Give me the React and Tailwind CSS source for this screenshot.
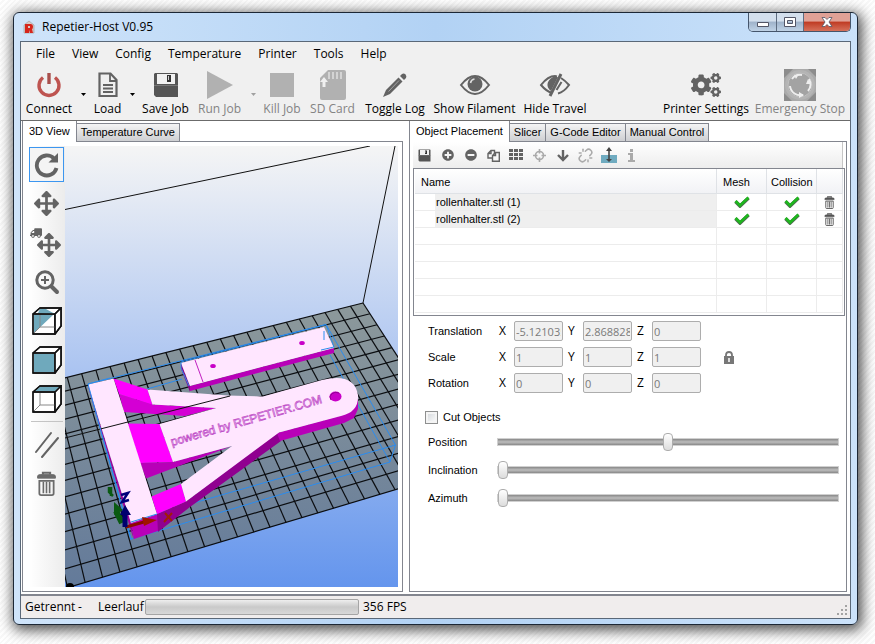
import React from 'react';
import { FaArrowsAlt, FaCogs, FaMinusCircle, FaPlusCircle, FaTruck } from 'react-icons/fa';
import { Unlink } from 'lucide-react';

const GRAY = '#636363';

/* ---------- icons ---------- */

function PowerIcon() {
  return (
    <svg width="26" height="28" viewBox="0 0 26 28" fill="none" stroke="#be5450" strokeWidth="3.4">
      <path d="M7 6.5a10 10 0 1 0 12 0" />
      <path d="M13 2v11" stroke="#a8504c" />
    </svg>
  );
}

function DocIcon() {
  return (
    <svg width="20" height="26" viewBox="0 0 20 26" fill="none" stroke={GRAY} strokeWidth="2.2">
      <path d="M1.5 1.5h11l6 6.5v16h-17z" />
      <path d="M12 2v7h6M5 13h10M5 16.5h10M5 20h10" strokeWidth="1.8" />
    </svg>
  );
}

function SaveIcon({ size = 26 }) {
  return (
    <svg width={size} height={size} viewBox="0 0 26 26">
      <path d="M2 1h22l1 1v23H3l-2-2V2z" fill="#555" />
      <path d="M4 2h18v10H4z" fill="#f1f1f1" />
      <path d="M14 3h4v7h-4z" fill="#333" />
      <path d="M15 4h1v4h-1z" fill="#ccc" />
      <path d="M1 13h24v1H1z" fill="#777" />
    </svg>
  );
}

function SdIcon() {
  return (
    <svg width="28" height="32" viewBox="0 0 28 32">
      <path d="M9 1h16a2 2 0 0 1 2 2v26a2 2 0 0 1-2 2H3a2 2 0 0 1-2-2V9z" fill="#b1b1b1" />
      <path d="M10 3v7M14 3v7M18 3v7M22 3v7" stroke="#d4d4d4" strokeWidth="2" />
      <path d="M5 8l4 5H6.500v5h-3v-5H1z" fill="#f0f0f0" />
    </svg>
  );
}

function PencilIcon() {
  return (
    <svg width="26" height="26" viewBox="0 0 26 26" fill={GRAY}>
      <path d="M16.500 5.500l4 4L8 22 1 25l3-7z" />
      <path d="M18 4l2-2q2-1 3.500.5T24 6l-2 2z" />
      <path d="M17 8.500L6.500 19.500" stroke="#a5a5a5" strokeWidth="1" />
    </svg>
  );
}

function EyeIcon() {
  return (
    <svg width="32" height="24" viewBox="0 0 32 24">
      <path d="M2 12Q9 3 16 3t14 9q-7 9-14 9T2 12z" fill="none" stroke={GRAY} strokeWidth="2" />
      <circle cx="16" cy="11" r="7.500" fill={GRAY} />
      <path d="M11.500 10a5 5 0 0 1 4-4" stroke="#ddd" strokeWidth="1.500" fill="none" />
    </svg>
  );
}

function HiddenEyeIcon() {
  return (
    <svg width="32" height="24" viewBox="0 0 32 24">
      <path d="M13 20Q7 18 2 12 9 3 16 3l2 .5M22 5q4 2.500 8 7-5 7-11 8.500" fill="none" stroke={GRAY} strokeWidth="2" />
      <path d="M19 4l-7 14q-4-3-3.500-7T14 4z" fill={GRAY} />
      <path d="M22 1L11 23" stroke={GRAY} strokeWidth="3" />
      <path d="M22.500 9l-5 8" stroke={GRAY} strokeWidth="2" />
    </svg>
  );
}

function EmergencyIcon() {
  return (
    <svg width="32" height="32" viewBox="0 0 32 32">
      <path d="M0 0h32v32H0z" fill="#aaa" />
      <path d="M0 0h9L0 9zM32 32v-9l-9 9zM32 0v8l-8-8zM0 32v-8l8 8z" fill="#8c8c8c" />
      <circle cx="16" cy="16" r="15" fill="#b4b4b4" />
      <circle cx="16" cy="16" r="12" fill="#a3a3a3" stroke="#bfbfbf" />
      <g stroke="#eee" strokeWidth="2" fill="none">
        <path d="M8 10a10.500 10.500 0 0 1 10-4" />
        <path d="M25 10a10.500 10.500 0 0 1-1 12" />
        <path d="M19 26a10.500 10.500 0 0 1-13-9" />
      </g>
      <path d="M10 6l5-1-3 5zM27 15l-3-5-2 5zM15 23v6l5-3z" fill="#eee" />
    </svg>
  );
}

function TrashIcon({ size = 12, color = '#555' }) {
  return (
    <svg width={size} height={size} viewBox="0 0 24 28" fill="none" stroke={color} className="shrink-0">
      <path d="M8 4V2h8v2" strokeWidth="2.400" />
      <path d="M2 8V6q0-2 3-2h14q3 0 3 2v2z" fill={color} strokeWidth="1" />
      <path d="M4 11h16v14q0 2-2 2H6q-2 0-2-2z" strokeWidth="2" />
      <path d="M8.500 12v13M12 12v13M15.500 12v13" strokeWidth="1.800" />
    </svg>
  );
}

function LockIcon() {
  return (
    <svg width="12" height="13" viewBox="0 0 12 13">
      <path d="M3 6V4q0-3 3-3t3 3v2" fill="none" stroke="#777" strokeWidth="1.800" />
      <path d="M1 5h10v8H1z" fill="#777" />
      <path d="M5 7h2v4H5z" fill="#ddd" />
    </svg>
  );
}

function CheckIcon() {
  return (
    <svg width="16" height="12" viewBox="0 0 16 12" className="mx-auto" fill="none">
      <path d="M1.500 5.500l4.500 4.500 8.500-8" stroke="#4c6b4c" strokeWidth="3.600" />
      <path d="M1.500 5l4.500 4.500 8.500-8" stroke="#1eb71e" strokeWidth="2.600" />
    </svg>
  );
}

function RotateIcon() {
  return (
    <svg width="26" height="26" viewBox="0 0 26 26">
      <path d="M20 6.500A10 10 0 1 0 22.500 16" fill="none" stroke={GRAY} strokeWidth="3.800" />
      <path d="M24 1v9.500h-9.500z" fill={GRAY} />
    </svg>
  );
}

function ZoomIcon() {
  return (
    <svg width="26" height="26" viewBox="0 0 26 26" fill="none" stroke={GRAY}>
      <circle cx="11" cy="11" r="8.200" strokeWidth="3" />
      <path d="M11 7v8M7 11h8" strokeWidth="2" />
      <path d="M17.500 17.500l5.500 5.500" strokeWidth="4" strokeLinecap="round" />
    </svg>
  );
}

function CubeIcon({ face }) {
  return (
    <svg width="30" height="28" viewBox="0 0 30 28" fill="none" stroke="#111" strokeWidth="1.300">
      <path d="M1 7h22v20H1zM1 7l7-6h21l-6 6M29 1v18l-6 8" fill="#fff" />
      <path d="M23 7l6-6v18l-6 8z" fill="#fff" />
      {face === 'cut' && <path d="M2 8h19L2 26zM8 2h6l9 5-17-1z" fill="#6fa9bc" stroke="none" />}
      {face === 'front' && <path d="M2 8h20v18H2z" fill="#6fa9bc" stroke="none" />}
      {face === 'top' && <path d="M3 6l5-4h19l-4 4z" fill="#6fa9bc" stroke="none" />}
      {face !== 'front' && <path d="M8 8v12h15M8 20l-6 6" stroke="#888" strokeWidth="1" />}
      <path d="M1 7h22v20H1zM1 7l7-6h21l-6 6M29 1v18l-6 8" />
    </svg>
  );
}

function ParallelIcon() {
  return (
    <svg width="26" height="28" viewBox="0 0 26 28" stroke={GRAY} strokeWidth="2" strokeLinecap="round">
      <path d="M2 21L17 2M8 26L24 7" />
    </svg>
  );
}

function DropArrow({ dim }) {
  return (
    <svg width="5" height="3" viewBox="0 0 5 3">
      <path d="M0 0h5L2.500 3z" fill={dim ? '#a0a0a0' : '#000'} />
    </svg>
  );
}

/* ---------- top toolbar ---------- */

function ToolButton({ label, icon, width, disabled, arrow }) {
  return (
    <div className="flex h-full items-center">
      <button disabled={disabled} className={`flex h-full flex-col items-center ${width} ${disabled ? 'text-[#838383]' : 'text-black'}`}>
        <span className="flex h-8 items-center justify-center">{icon}</span>
        <span className="whitespace-nowrap leading-4">{label}</span>
      </button>
      {arrow && (
        <button aria-label={`${label} options`} disabled={disabled} className={`flex h-full items-center justify-center ${arrow}`}>
          <DropArrow dim={disabled} />
        </button>
      )}
    </div>
  );
}

function Toolbar() {
  return (
    <div className="flex h-[51px] items-stretch pl-px">
      <ToolButton label="Connect" icon={<PowerIcon />} width="w-[54px]" arrow="w-[14px]" />
      <ToolButton label="Load" icon={<DocIcon />} width="w-[35px]" arrow="w-[15px]" />
      <ToolButton label="Save Job" icon={<SaveIcon />} width="w-[51px]" />
      <ToolButton
        label="Run Job"
        disabled
        width="w-[57px]"
        arrow="w-[10px]"
        icon={<svg width="26" height="28" viewBox="0 0 26 28"><path d="M0 0l26 14L0 28z" fill="#b1b1b1" /></svg>}
      />
      <ToolButton
        label="Kill Job"
        disabled
        width="w-[48px]"
        icon={<span className="h-6 w-6 bg-[#b1b1b1]" />}
      />
      <ToolButton label="SD Card" icon={<SdIcon />} width="w-[53px]" disabled />
      <ToolButton label="Toggle Log" icon={<PencilIcon />} width="w-[72px]" />
      <ToolButton label="Show Filament" icon={<EyeIcon />} width="w-[87px]" />
      <ToolButton label="Hide Travel" icon={<HiddenEyeIcon />} width="w-[74px]" />
      <div className="flex-1" />
      <ToolButton label="Printer Settings" icon={<FaCogs size={30} color={GRAY} />} width="w-[94px]" />
      <ToolButton label="Emergency Stop" icon={<EmergencyIcon />} width="w-[94px]" disabled />
      <div className="w-[3px]" />
    </div>
  );
}

/* ---------- 3D view ---------- */

// Projects a bed cell index (u across, v towards the viewer) to canvas coordinates.
function project(u, v) {
  const a = 0.003033 * u;
  const b = -0.01264 * v;
  const w = 1 + a + b;
  return [(363 + a * 4499 - b * 179) / w, (303 - a * 736 - b * 534) / w];
}

function bedLine(from, to) {
  return 'M' + project(...from).join(' ') + 'L' + project(...to).join(' ');
}

function Scene() {
  const cols = Array.from({ length: 26 }, (_, i) => i - 25);
  const rows = Array.from({ length: 14 }, (_, i) => i);
  const bed = [project(-25, 0), project(0, 0), project(0, 13), project(-25, 13)].map((p) => p.join(',')).join(' ');

  return (
    <svg viewBox="65 146 333 441" preserveAspectRatio="xMidYMid slice" className="h-full w-full" aria-label="3D print bed">
      <defs>
        <linearGradient id="sky" x1="0" y1="0" x2="0" y2="1">
          <stop offset="0" stopColor="#f5f5f5" />
          <stop offset="1" stopColor="#6495ed" />
        </linearGradient>
        <linearGradient id="bed" x1="0" y1="0" x2="0" y2="1">
          <stop offset="0" stopColor="#8d999b" />
          <stop offset="1" stopColor="#637a9a" />
        </linearGradient>
      </defs>
      <path d="M0 146h500v441H0z" fill="url(#sky)" />
      <path d="M65 209.500L370 146M363 303L395 146" stroke="#111" fill="none" />
      <polygon points={bed} fill="url(#bed)" />
      <g stroke="#0b0d10" strokeWidth="1.200">
        {cols.map((u) => <path key={u} d={bedLine([u, 0], [u, 13])} />)}
        {rows.map((v) => <path key={v} d={bedLine([-25, v], [0, v])} />)}
      </g>
      <circle cx="70" cy="587" r="4" />

      {/* bounding boxes behind the parts */}
      <g stroke="#2b8cee" fill="none">
        <path d="M88 384L326 324.500L395.500 445L390 462L330 355M395.500 445L131 521M390 462L131 539L88 384M147 389L182 379" />
      </g>

      {/* flat bar */}
      <path d="M181 363l9 23v6l-9-23z" fill="#8c008c" />
      <path d="M190 386l144-38v5l-144 38z" fill="#b800b8" />
      <path d="M181 363L324 327L334 348L190 386z" fill="#ffe6ff" />
      <path d="M195 360l8 22" stroke="#c020c0" />
      <ellipse cx="213" cy="366" rx="2.800" ry="2" fill="#c800c8" />
      <ellipse cx="302" cy="343" rx="2.800" ry="2" fill="#c800c8" />
      <path d="M181 362L326 324.500L334 347M324 331v9M321 350l13-3M181 362v6l8 18" stroke="#2b8cee" fill="none" />

      {/* holder */}
      <path d="M88 385l43 138 3 17-3-9L89 390z" fill="#a000a0" />
      <path d="M131 523l27-9v17l-24 8z" fill="#b800b8" />
      <path d="M157 514L186 501.500L277 432L281 441L190 507L158 532z" fill="#900090" />
      <path d="M277 433L343 415L355 407L358 397V409L354 418L344 423L280 441z" fill="#b800b8" />
      <path d="M113.500 378.500L147.500 389.500L152.500 405L119 394z" fill="#f0f" />
      <path d="M119 394L152.500 404.500L216 408L185 416L124 412z" fill="#d400d4" />
      <path d="M127.500 423.500L159.500 424L173 462L140 463z" fill="#f0f" />
      <path d="M140 463L173 462L232 446L146 478.500z" fill="#b800b8" />
      <path d="M151.500 496.500L181 484L186 501.500L157 514z" fill="#f0f" />
      <path
        d="M147.500 389.500L228 395.500L263 396.500L322 380Q354 372 358 395Q359 412 341 416L279 432.500L186 501.500L181 484L232 446L173 462L159.500 424L216 408L152.500 404.500z"
        fill="#ffe6ff"
      />
      <path d="M88 384.500L113.500 378.500L157 514L131 523z" fill="#ffe6ff" />
      <ellipse cx="335.500" cy="396.500" rx="6" ry="5" fill="#c800c8" />
      <path d="M331 400a6 5 0 0 1 8-7" stroke="#900090" fill="none" />
      <path d="M65 438L230 396" stroke="#111" />
      <path d="M88 384l43 156M157 514L131 522M88 384l22-6" stroke="#2b8cee" fill="none" />
      <text
        transform="translate(172 446) rotate(-16)"
        fill="#ffe6ff"
        stroke="#c050c8"
        strokeWidth="0.700"
        className="font-['Liberation_Sans'] text-[12px]"
      >
        powered by REPETIER.COM
      </text>

      {/* axes */}
      <path d="M122 523L116 511" stroke="#0a5a12" strokeWidth="6" />
      <path d="M114 502l9 8-9 5z" fill="#0a5a12" />
      <path d="M126 527l18-5" stroke="#8c0a00" strokeWidth="3" />
      <path d="M142 517l15 3-13 6z" fill="#a01400" />
      <path d="M125 527v-13" stroke="#00006e" strokeWidth="5" />
      <path d="M120 515l5-10 6 10z" fill="#00006e" />
      <path d="M109 487v5l4 4M111 487v9" stroke="#0a5a12" strokeWidth="2.500" fill="none" />
      <path d="M121 495l7-2-6 9 7-2" stroke="#00007a" strokeWidth="2.500" fill="none" />
      <path d="M165 513l7 8M172 513l-8 9" stroke="#a01c08" strokeWidth="2" />
    </svg>
  );
}

function Tab({ label, active }) {
  return (
    <button
      role="tab"
      aria-selected={Boolean(active)}
      className={
        active
          ? 'relative -mb-px h-[21px] whitespace-nowrap border-x border-[#83868f] bg-white px-[6px] pb-px'
          : 'h-[18px] whitespace-nowrap border border-b-0 border-l-0 border-[#83868f] bg-linear-to-b from-[#f4f4f4] to-[#cecfd2] px-1'
      }
    >
      {label}
    </button>
  );
}

function ViewPanel() {
  const tools = [
    { id: 'Rotate', icon: <RotateIcon /> },
    { id: 'Move', icon: <FaArrowsAlt size={25} color={GRAY} /> },
    {
      id: 'Move object',
      icon: (
        <span className="relative flex">
          <FaTruck size={12} color={GRAY} className="absolute -left-[2px] -top-[2px] -scale-x-100" />
          <FaArrowsAlt size={24} color={GRAY} className="ml-[5px] mt-1" />
        </span>
      ),
    },
    { id: 'Zoom', icon: <ZoomIcon /> },
    { id: 'Perspective', icon: <CubeIcon face="cut" /> },
    { id: 'Front view', icon: <CubeIcon face="front" /> },
    { id: 'Top view', icon: <CubeIcon face="top" /> },
  ];

  return (
    <section className="flex min-w-0 flex-col">
      <div role="tablist" className="flex h-5 items-end">
        <Tab label="3D View" active />
        <Tab label="Temperature Curve" />
      </div>
      <div className="flex min-h-0 flex-1 border border-[#83868f] bg-white py-1 pl-[6px] pr-1">
        <div className="flex w-9 flex-col items-center bg-linear-to-r from-white to-[#ececec] pr-px">
          {tools.map((tool, i) => (
            <button
              key={tool.id}
              aria-label={tool.id}
              className={`flex items-center justify-center ${i === 0 ? 'mt-px mb-[2px] h-[35px] w-[35px] border border-[#3c96f0] bg-[#f4f4f4]' : 'h-[39px] w-[35px]'}`}
            >
              {tool.icon}
            </button>
          ))}
          <div className="my-[3px] h-px w-8 bg-[#c4c4c4]" />
          <button aria-label="Split" className="flex h-[39px] w-[35px] items-center justify-center"><ParallelIcon /></button>
          <button aria-label="Delete" className="flex h-[39px] w-[35px] items-center justify-center"><TrashIcon size={25} color="#6b6b6b" /></button>
        </div>
        <div className="relative min-w-0 flex-1 overflow-hidden">
          <div className="absolute inset-0"><Scene /></div>
        </div>
      </div>
    </section>
  );
}

/* ---------- object placement ---------- */

function ObjectToolbar() {
  const items = [
    { id: 'Save', icon: <SaveIcon size={13} /> },
    { id: 'Add', icon: <FaPlusCircle size={12} color={GRAY} /> },
    { id: 'Remove', icon: <FaMinusCircle size={12} color={GRAY} /> },
    {
      id: 'Copy',
      icon: (
        <svg width="13" height="13" viewBox="0 0 13 13" fill="#f6f6f6" stroke={GRAY} strokeWidth="1.400">
          <path d="M4 1.500h3.500v7.500H1V4.500zM4 1.500v3H1" />
          <path d="M8.500 3.500h3.800v8.700H5.500V6.500zM8.500 3.500v3h-3" />
        </svg>
      ),
    },
    {
      id: 'Arrange',
      icon: (
        <svg width="15" height="12" viewBox="0 0 15 12" fill={GRAY}>
          <path d="M0 0h4v3H0zM5 0h4v3H5zM10 0h4v3h-4zM0 4h4v3H0zM5 4h4v3H5zM10 4h4v3h-4zM0 8h4v3H0zM5 8h4v3H5zM10 8h4v3h-4z" />
        </svg>
      ),
    },
    {
      id: 'Center',
      icon: (
        <svg width="13" height="13" viewBox="0 0 13 13" fill="none" stroke="#aaa" strokeWidth="1.600">
          <circle cx="6.500" cy="6.500" r="4" />
          <path d="M6.500 0v4.500M6.500 8.500V13M0 6.500h4.500M8.500 6.500H13" />
        </svg>
      ),
    },
    {
      id: 'Drop',
      icon: (
        <svg width="12" height="13" viewBox="0 0 12 13" fill="none" stroke={GRAY} strokeWidth="2.400">
          <path d="M6 1v10M1 6l5 5 5-5" />
        </svg>
      ),
    },
    { id: 'Split', icon: <Unlink size={15} color="#aaa" strokeWidth={2.4} /> },
    {
      id: 'Cut',
      icon: (
        <svg width="16" height="16" viewBox="0 0 16 16">
          <path d="M0 8h16v8H0z" fill="#6fabc0" />
          <path d="M8 2v11" stroke="#444" strokeWidth="1.600" />
          <path d="M8 0l3 4H5zM5 12h6l-3 3z" fill="#444" />
        </svg>
      ),
    },
    {
      id: 'Info',
      icon: (
        <svg width="7" height="13" viewBox="0 0 7 13" fill="#aaa">
          <path d="M2 0h3v3H2zM0 4h5v7h2v2H0v-2h2V6H0z" />
        </svg>
      ),
    },
  ];
  return (
    <div className="mr-[2px] flex h-[26px] items-center border-r border-[#c6c6c6] bg-linear-to-b from-white to-[#ededed]">
      {items.map((item) => (
        <button key={item.id} aria-label={item.id} className="flex h-6 w-[23px] items-center justify-center">
          {item.icon}
        </button>
      ))}
    </div>
  );
}

function ObjectTable() {
  const files = ['rollenhalter.stl (1)', 'rollenhalter.stl (2)', '', '', '', '', ''];
  const head = 'border-r border-b border-[#dfe2e6] text-left font-normal pt-[2px]';
  const cell = 'h-[17px] border-b border-r border-[#ececec] p-0 leading-4';

  return (
    <div className="h-[148px] border border-[#83868f] bg-white px-[1px]">
      <table className="w-full table-fixed border-separate border-spacing-0">
        <thead>
          <tr className="h-[25px] bg-linear-to-b from-white to-[#f1f2f5]">
            <th className={`${head} pl-[6px]`}>Name</th>
            <th className={`${head} w-[50px] pl-[6px]`}>Mesh</th>
            <th className={`${head} w-[50px] pl-1`}>Collision</th>
            <th className={`${head} w-[26px]`} aria-label="Delete" />
          </tr>
        </thead>
        <tbody>
          {files.map((file, i) => (
            <tr key={i}>
              <td className={cell}>
                {file && <div className="ml-[20px] h-4 bg-[#efefef] pl-px leading-[17px]">{file}</div>}
              </td>
              <td className={cell}>{file && <CheckIcon />}</td>
              <td className={cell}>{file && <CheckIcon />}</td>
              <td className={cell}>
                {file && <button aria-label={`Delete ${file}`} className="mx-auto block"><TrashIcon size={13} /></button>}
              </td>
            </tr>
          ))}
        </tbody>
      </table>
    </div>
  );
}

function Transform() {
  const rows = [
    { label: 'Translation', values: ['-5.121035', '2.868828', '0'] },
    { label: 'Scale', values: ['1', '1', '1'], lock: true },
    { label: 'Rotation', values: ['0', '0', '0'] },
  ];
  return (
    <div className="flex flex-col gap-[6px] pl-[15px] pt-[5px]">
      {rows.map((row) => (
        <div key={row.label} className="flex h-5 items-center">
          <span className="w-[71px]">{row.label}</span>
          {['X', 'Y', 'Z'].map((axis, i) => (
            <label key={axis} className="mr-[5px] flex items-center font-['Open_Sans',sans-serif]">
              <span className="w-[15px] text-[12px]">{axis}</span>
              <input
                disabled
                aria-label={`${row.label} ${axis}`}
                defaultValue={row.values[i]}
                className="h-5 w-[49px] rounded-[2px] border border-[#adadad] bg-[#f0f0f0] px-[1px] text-[11px] text-[#7a7a7a]"
              />
            </label>
          ))}
          {row.lock && <button aria-label="Lock aspect ratio" className="ml-[17px]"><LockIcon /></button>}
        </div>
      ))}
    </div>
  );
}

function Slider({ label, value }) {
  return (
    <label className="flex h-7 items-center">
      <span className="w-[69px] shrink-0">{label}</span>
      <input
        type="range"
        defaultValue={value}
        className="h-2 min-w-0 flex-1 appearance-none border border-[#d0d0d0] bg-linear-to-b from-[#888] via-[#bdbdbd] to-[#888] [&::-webkit-slider-thumb]:h-[18px] [&::-webkit-slider-thumb]:w-[10px] [&::-webkit-slider-thumb]:appearance-none [&::-webkit-slider-thumb]:rounded-[4px] [&::-webkit-slider-thumb]:border [&::-webkit-slider-thumb]:border-[#adadad] [&::-webkit-slider-thumb]:bg-linear-to-b [&::-webkit-slider-thumb]:from-white [&::-webkit-slider-thumb]:to-[#dcdcdc]"
      />
    </label>
  );
}

function PlacementPanel() {
  return (
    <section className="flex min-w-0 flex-col">
      <div role="tablist" className="flex h-5 items-end">
        <Tab label="Object Placement" active />
        <Tab label="Slicer" />
        <Tab label="G-Code Editor" />
        <Tab label="Manual Control" />
      </div>
      <div className="flex-1 border border-[#83868f] bg-white pl-[3px] pr-px">
        <ObjectToolbar />
        <ObjectTable />
        <Transform />
        <div className="pl-[12px] pr-[6px] pt-[14px]">
          <label className="flex h-5 items-center gap-[5px]">
            <input type="checkbox" className="h-[13px] w-[13px] appearance-none border border-[#8e8f8f] bg-linear-to-br from-[#d0d4d8] to-white shadow-[inset_0_0_0_2px_#f4f4f4]" />
            Cut Objects
          </label>
          <div className="pl-[3px] pt-px">
            <Slider label="Position" value={50} />
            <Slider label="Inclination" value={0} />
            <Slider label="Azimuth" value={0} />
          </div>
        </div>
      </div>
    </section>
  );
}

/* ---------- window ---------- */

function TitleBar() {
  return (
    <header className="flex h-7 items-start justify-between pl-[3px]">
      <div className="flex h-7 items-center gap-[7px]">
        <svg width="12" height="14" viewBox="0 0 12 14">
          <path d="M1 5l5-4 5 4v8H1z" fill="#d9c9c9" stroke="#999" strokeWidth="0.600" />
          <path d="M2 4h6q2 0 2 2.500T9 9l1 4H7L6 10v3H2zM5 6v2h2V6z" fill="#d6261c" fillRule="evenodd" />
        </svg>
        <h1>Repetier-Host V0.95</h1>
      </div>
      <div className="flex h-[19px] overflow-hidden rounded-b-[5px] border border-t-0 border-[#45556b]">
        <button aria-label="Minimize" className="flex w-7 items-center justify-center border-r border-[#5d6c80] bg-linear-to-b from-[#d3dfec] from-45% via-[#9fb3ca] via-50% to-[#bfd2e6]">
          <svg width="12" height="5" viewBox="0 0 12 5" className="mt-1"><path d="M.5.5h11v4H.5z" fill="#fff" stroke="#535666" /></svg>
        </button>
        <button aria-label="Maximize" className="flex w-[27px] items-center justify-center border-r border-[#5d6c80] bg-linear-to-b from-[#d3dfec] from-45% via-[#9fb3ca] via-50% to-[#bfd2e6]">
          <svg width="12" height="10" viewBox="0 0 12 10"><path d="M.5.5h11v9H.5zM3.500 3.500v3h5v-3z" fill="#fff" fillRule="evenodd" stroke="#535666" /></svg>
        </button>
        <button aria-label="Close" className="flex w-[46px] items-center justify-center bg-linear-to-b from-[#e0a196] from-45% via-[#bf3a22] via-50% to-[#d5705a]">
          <svg width="12" height="10" viewBox="0 0 12 10"><path d="M1 .5h3l2 2 2-2h3L8 5l3 4.500H8l-2-2-2 2H1L4 5z" fill="#fff" stroke="#535666" strokeWidth="0.800" /></svg>
        </button>
      </div>
    </header>
  );
}

function StatusBar() {
  return (
    <footer className="flex h-6 items-center border-t-2 border-[#83868f] bg-[#f0eded] pl-1">
      <span className="w-[53px]">Getrennt</span>
      <span className="w-[20px]">-</span>
      <span className="w-[47px]">Leerlauf</span>
      <div className="h-[16px] w-[214px] rounded-[2px] border border-[#a5a5a5] bg-linear-to-b from-[#eee] via-[#c9c9c9] to-[#d8d8d8]" />
      <span className="pl-1">356 FPS</span>
      <svg width="11" height="11" viewBox="0 0 11 11" fill="#a3a3a3" className="ml-auto mr-[2px] mt-[6px]">
        <path d="M8 0h2v2H8zM4 4h2v2H4zM8 4h2v2H8zM0 8h2v2H0zM4 8h2v2H4zM8 8h2v2H8z" />
      </svg>
    </footer>
  );
}

export default function App() {
  const menu = ['File', 'View', 'Config', 'Temperature', 'Printer', 'Tools', 'Help'];

  return (
    <div className="flex min-h-screen bg-[repeating-linear-gradient(135deg,#fff_0px,#fff_2px,#f8f8f8_2px,#f8f8f8_4px)] pb-[19px] pl-[13px] pr-[17px] pt-[12px] font-['Open_Sans','Noto_Sans',sans-serif] text-[12px] text-black">
      <div className="flex min-w-0 flex-1 flex-col rounded-[6px] border border-[#1c2735] bg-linear-to-r from-[#cfe4fa] via-[#b2d2f4] to-[#cbe2fa] px-[6px] pb-[5px] shadow-[2px_3px_14px_2px_rgba(0,0,0,0.7)]">
        <TitleBar />
        <div className="flex min-h-0 flex-1 flex-col border border-[#5a6878] bg-[#f0f0f0]">
          <nav className="flex h-[27px] items-center gap-[17px] pb-[3px] pl-[15px]">
            {menu.map((item) => (
              <button key={item}>{item}</button>
            ))}
          </nav>
          <Toolbar />
          <main className="grid flex-1 grid-cols-[381fr_438fr] gap-[6px] border-t border-[#6b6b6b] bg-white pb-[2px] pl-px pr-[3px] font-['Liberation_Sans',Arial,sans-serif] text-[11px]">
            <ViewPanel />
            <PlacementPanel />
          </main>
          <StatusBar />
        </div>
      </div>
    </div>
  );
}
